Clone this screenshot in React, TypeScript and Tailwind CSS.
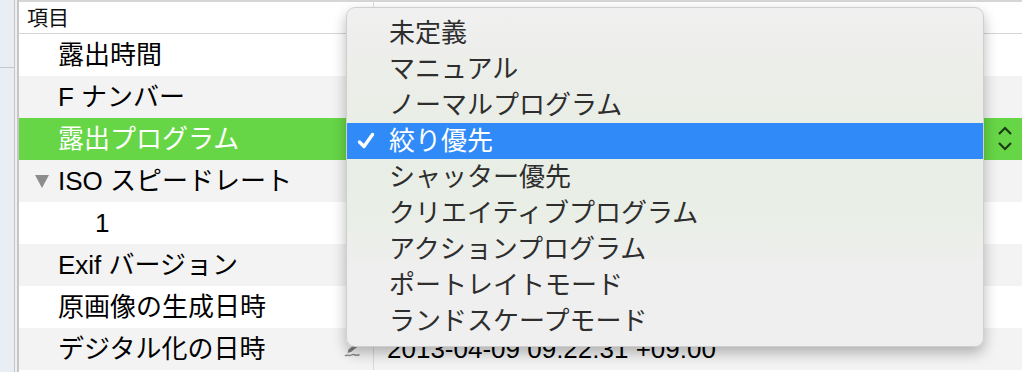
import React from "react";

type Row = {
  label: string;
  indent: number;
  value?: string;
  disclosure?: boolean;
  selected?: boolean;
  editable?: boolean;
};

// values under the open popup are not shown; only the last row peeks out below it
const rows: Row[] = [
  { label: "露出時間", indent: 39 },
  { label: "F ナンバー", indent: 39 },
  { label: "露出プログラム", indent: 39, selected: true },
  { label: "ISO スピードレート", indent: 39, disclosure: true },
  { label: "1", indent: 76 },
  { label: "Exif バージョン", indent: 39 },
  { label: "原画像の生成日時", indent: 39 },
  { label: "デジタル化の日時", indent: 39, value: "2013-04-09 09:22:31 +09:00", editable: true },
];

const options = [
  "未定義",
  "マニュアル",
  "ノーマルプログラム",
  "絞り優先",
  "シャッター優先",
  "クリエイティブプログラム",
  "アクションプログラム",
  "ポートレイトモード",
  "ランドスケープモード",
];

const font = "font-['Liberation_Sans','Noto_Sans_CJK_JP',sans-serif]";

function PenIcon() {
  return (
    <svg width="17" height="16" viewBox="0 0 17 16" fill="none">
      <path d="M12.5 1 L15 3.5 L7 10 L3.5 11 L4.5 7.5 Z" fill="#7d7d7d" />
      <path d="M1 14 C3 11.5 5 15 7.5 13 C10 11 11 15 15.5 12.5" stroke="#8e8e8e" strokeWidth="1.5" />
    </svg>
  );
}

function Stepper() {
  return (
    <svg width="16" height="26" viewBox="0 0 16 26" fill="none">
      <path d="M2 8 L8 2 L14 8" stroke="#1d3a16" strokeWidth="2.2" />
      <path d="M2 17 L8 23 L14 17" stroke="#1d3a16" strokeWidth="2.2" />
    </svg>
  );
}

function Check() {
  return (
    <svg width="18" height="18" viewBox="0 0 18 18" fill="none">
      <path d="M2.5 10 L7 14.5 L15.5 2.5" stroke="#ffffff" strokeWidth="3.4" strokeLinecap="round" strokeLinejoin="round" />
    </svg>
  );
}

export default function App() {
  return (
    <div className={`relative flex h-[372px] w-[1022px] overflow-hidden bg-white ${font}`}>
      <div className="flex w-[14px] flex-col bg-[#e9eef5]">
        <div className="h-[67px]" />
        <div className="h-px bg-[#c4c8cc]" />
      </div>
      <div className="w-[5px] border-l border-r-2 border-[#c6c6c6] bg-[#efefef]" />

      <div className="flex flex-1 flex-col">
        <div className="flex h-[34px] items-center border-t-2 border-b border-t-[#d6d6d6] border-b-[#d4d4d4] text-[21px] text-[#111]">
          <div className="flex h-full w-[355px] items-center border-r border-[#dedede] pl-[8px]">項目</div>
          <div className="pl-[13px]">値</div>
        </div>

        {rows.map((row, i) => (
          <div
            key={row.label}
            className={`flex h-[42px] items-center text-[26px] ${
              row.selected ? "bg-[#66d646] text-white" : i % 2 === 0 ? "bg-white text-black" : "bg-[#f3f3f3] text-black"
            }`}
          >
            <div className="relative flex h-full w-[355px] items-center border-r border-[#d8d8d8]" style={{ paddingLeft: row.indent }}>
              {row.disclosure && (
                <span className="absolute left-[16px] top-[15px] h-0 w-0 border-x-[7px] border-t-[13px] border-x-transparent border-t-[#8c8c8c]" />
              )}
              <span className="whitespace-nowrap">{row.label}</span>
              {row.editable && (
                <span className="absolute right-[12px] top-[14px]">
                  <PenIcon />
                </span>
              )}
            </div>
            <div className="flex flex-1 items-center justify-between pl-[13px] pr-[9px]">
              <span className="whitespace-nowrap">{row.value}</span>
              {row.selected && <Stepper />}
            </div>
          </div>
        ))}
        <div className="flex-1 bg-white" />
      </div>

      <div className="absolute left-[346px] top-[7px] h-[340px] w-[638px] rounded-[9px] border border-[#cfcfcf] bg-[linear-gradient(180deg,#f0f0f0_0%,#eceee9_20%,#e8eee5_40%,#e9eee6_60%,#efefef_78%,#efefef_100%)] pt-[7px] shadow-[0_6px_14px_rgba(0,0,0,0.28)]">
        {options.map((opt) => {
          const active = opt === "絞り優先";
          return (
            <div
              key={opt}
              className={`relative flex h-[36px] items-center pl-[42px] text-[26px] ${
                active ? "bg-[#308af7] text-white" : "text-[#2e2e2e]"
              }`}
            >
              {active && (
                <span className="absolute left-[10px] top-[9px]">
                  <Check />
                </span>
              )}
              <span className="whitespace-nowrap leading-none">{opt}</span>
            </div>
          );
        })}
      </div>
    </div>
  );
}
